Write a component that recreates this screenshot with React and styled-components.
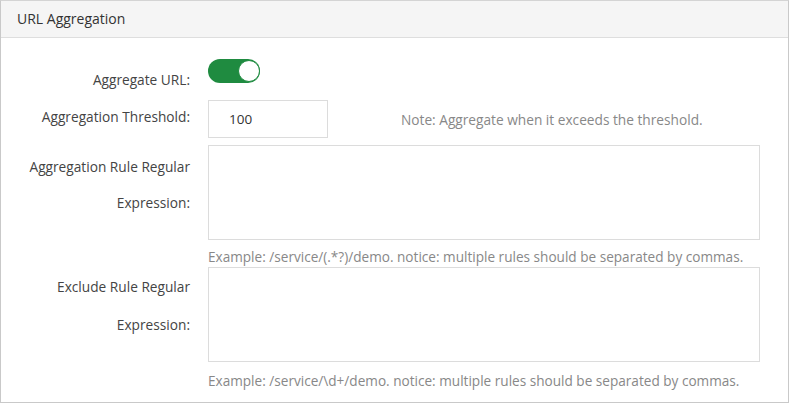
import React, { useState } from 'react';
import styled, { createGlobalStyle } from 'styled-components';

const GlobalStyle = createGlobalStyle`
  html, body {
    margin: 0;
    padding: 0;
    background: #fff;
  }
  body {
    font-family: "Open Sans", "Noto Sans", sans-serif;
    color: #333;
  }
`;

const Panel = styled.section`
  width: 789px;
  height: 403px;
  box-sizing: border-box;
  border: 1px solid #c9c9c9;
  border-top-color: #d4d4d4;
`;

const PanelHeader = styled.header`
  height: 37px;
  box-sizing: border-box;
  padding: 0 16px 1px;
  display: flex;
  align-items: center;
  background: #f5f5f5;
  border-bottom: 1px solid #dedede;
  font-size: 14px;
  color: #333;
`;

const Form = styled.div`
  padding-top: 21px;
`;

const Row = styled.div`
  display: flex;
  align-items: flex-start;
  margin-bottom: ${(p) => p.$gap || 0}px;
`;

const Label = styled.label`
  width: 189px;
  flex-shrink: 0;
  box-sizing: border-box;
  text-align: right;
  font-size: 13.7px;
  line-height: ${(p) => p.$lh || 20}px;
  padding-top: ${(p) => p.$top || 0}px;
  color: #444;
  white-space: nowrap;
`;

const Field = styled.div`
  margin-left: 18px;
  display: flex;
  flex-direction: column;
  align-items: flex-start;
`;

const Inline = styled.div`
  display: flex;
  align-items: center;
`;

const Track = styled.button`
  width: 52px;
  height: 24px;
  padding: 0;
  border: none;
  border-radius: 12px;
  background: ${(p) => (p.$on ? '#1f8b40' : '#ccc')};
  display: flex;
  align-items: center;
  justify-content: ${(p) => (p.$on ? 'flex-end' : 'flex-start')};
  cursor: pointer;
`;

const Knob = styled.span`
  width: 22px;
  height: 22px;
  box-sizing: border-box;
  border-radius: 50%;
  background: #fff;
  border: 1px solid ${(p) => (p.$on ? '#1f8b40' : '#ccc')};
`;

const TextInput = styled.input`
  width: 120px;
  height: 38px;
  box-sizing: border-box;
  border: 1px solid #dcdcdc;
  padding: 0 20px;
  font-family: inherit;
  font-size: 13.5px;
  color: #333;
  outline: none;
`;

const Note = styled.span`
  margin-left: 73px;
  font-size: 13.7px;
  color: #888;
`;

const TextArea = styled.textarea`
  width: 552px;
  height: 95px;
  box-sizing: border-box;
  border: 1px solid #dcdcdc;
  resize: none;
  font-family: inherit;
  outline: none;
  display: block;
`;

const Hint = styled.div`
  margin-top: ${(p) => p.$top || 7}px;
  font-size: 13.6px;
  color: #888;
  line-height: 20px;
  white-space: nowrap;
`;

export default function App() {
  const [on, setOn] = useState(true);
  return (
    <>
      <GlobalStyle />
      <Panel>
        <PanelHeader>URL Aggregation</PanelHeader>
        <Form>
          <Row $gap={10}>
            <Label $top={11}>Aggregate URL:</Label>
            <Field>
              <Track $on={on} onClick={() => setOn(!on)}>
                <Knob $on={on} />
              </Track>
            </Field>
          </Row>
          <Row $gap={7}>
            <Label $top={7}>Aggregation Threshold:</Label>
            <Field>
              <Inline>
                <TextInput defaultValue="100" />
                <Note>Note: Aggregate when it exceeds the threshold.</Note>
              </Inline>
            </Field>
          </Row>
          <Row>
            <Label $top={4} $lh={36}>
              Aggregation Rule Regular
              <br />
              Expression:
            </Label>
            <Field>
              <TextArea />
              <Hint>Example: /service/(.*?)/demo. notice: multiple rules should be separated by commas.</Hint>
            </Field>
          </Row>
          <Row>
            <Label $top={1} $lh={38}>
              Exclude Rule Regular
              <br />
              Expression:
            </Label>
            <Field>
              <TextArea />
              <Hint $top={9}>
                Example: /service/\d+/demo. notice: multiple rules should be separated by commas.
              </Hint>
            </Field>
          </Row>
        </Form>
      </Panel>
    </>
  );
}
